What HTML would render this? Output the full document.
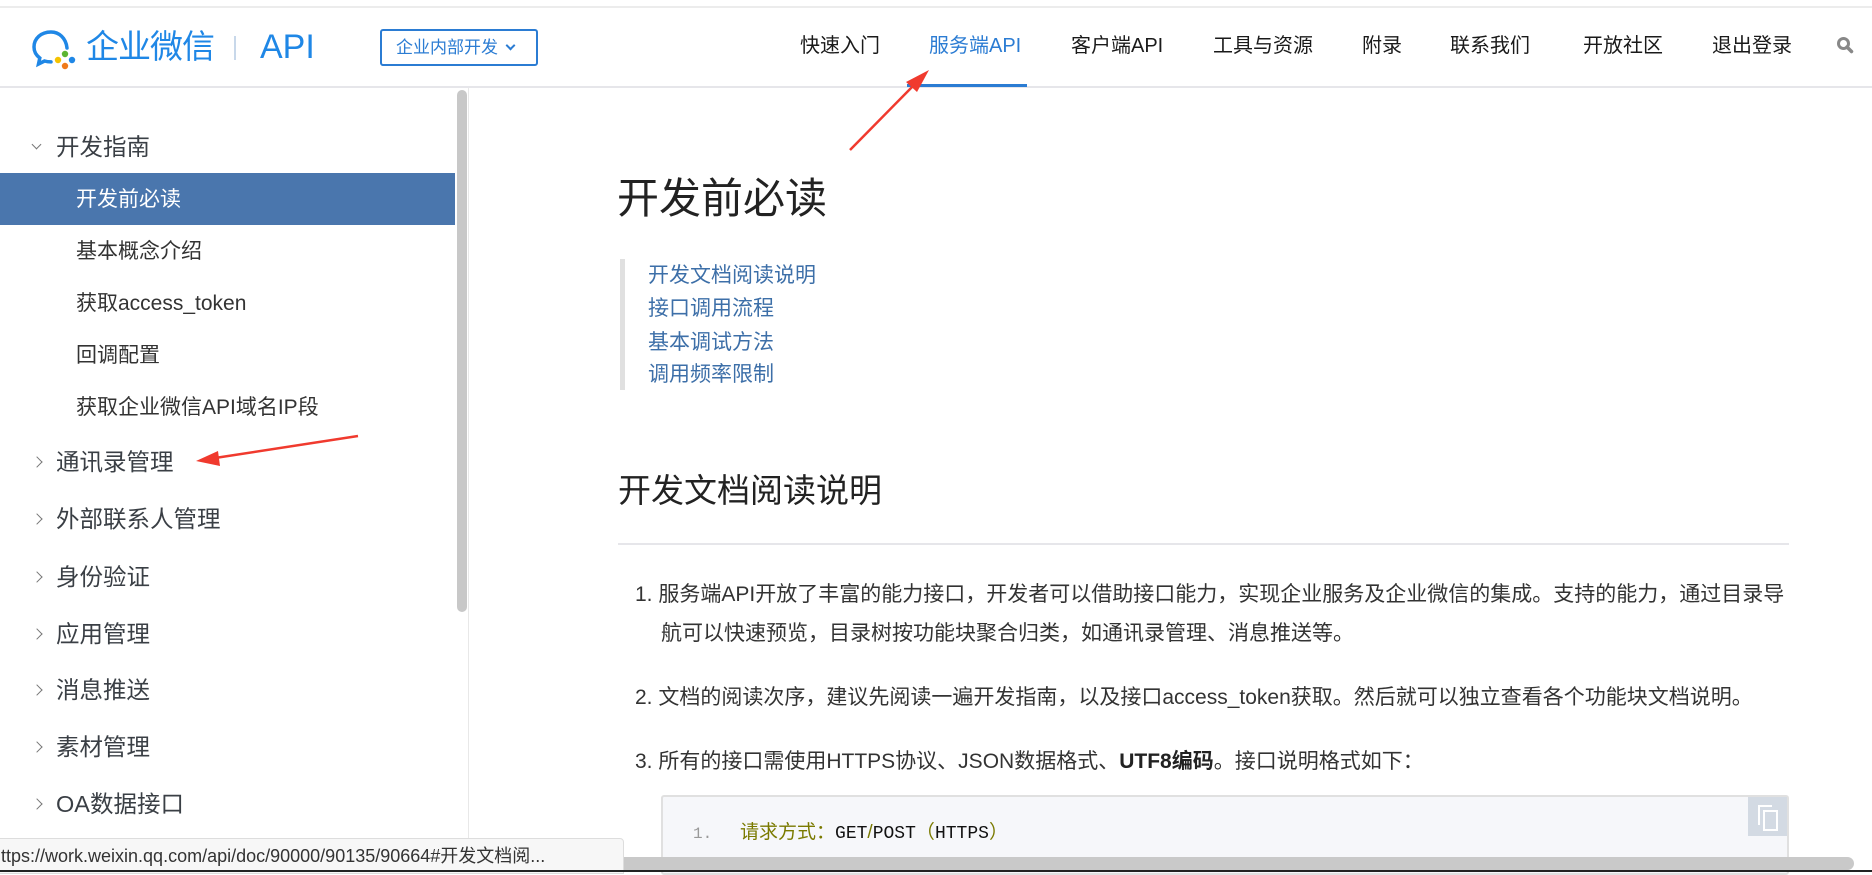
<!DOCTYPE html>
<html><head><meta charset="utf-8"><style>
*{margin:0;padding:0;box-sizing:border-box}
body{width:1872px;height:872px;overflow:hidden;background:#fff;position:relative;font-family:"Liberation Sans","Noto Sans CJK SC",sans-serif;color:#333}
.a{position:absolute;white-space:nowrap}
.nav{position:absolute;top:31px;height:30px;line-height:30px;font-size:20px;color:#1a1a1a}
.side{font-size:23.5px;color:#3a3f45;height:34px;line-height:34px;left:56px}
.chev{position:absolute;left:33px;width:8px;height:8px;border-right:1.6px solid #777;border-top:1.6px solid #777;transform:rotate(45deg)}
.sub{font-size:21px;color:#333;left:76px;height:30px;line-height:30px}
.toc{left:648px;font-size:21px;color:#3d6fa8;height:30px;line-height:30px}
.li{font-size:21px;color:#333;height:30px;line-height:30px}
</style></head><body>
<div class="a" style="left:0;top:6px;width:1872px;height:2px;background:#ececec"></div>
<svg class="a" style="left:31px;top:28px" width="48" height="44" viewBox="0 0 48 44">
<path d="M36 20C35 10 28 4 20 4C10 4 3 10.5 3 19c0 4.5 2.2 8.3 5.8 11L7.5 36l6-3c2 .6 4.2 .9 6.5 .9" fill="none" stroke="#1f87e6" stroke-width="3.5" stroke-linecap="round"/>
<circle cx="34" cy="26" r="3.2" fill="#5cb531"/><circle cx="41" cy="32" r="3.2" fill="#1f87e6"/><circle cx="27" cy="32" r="3.2" fill="#f5c300"/><circle cx="34" cy="38" r="3.2" fill="#f07a1a"/>
</svg>
<div class="a" style="left:86px;top:26px;font-size:33px;line-height:42px;color:#1f87e6;letter-spacing:-1px">企业微信</div>
<div class="a" style="left:234px;top:36px;width:2px;height:24px;background:#c8d8ea"></div>
<div class="a" style="left:260px;top:26px;font-size:34px;line-height:42px;color:#1f87e6">API</div>
<div class="a" style="left:380px;top:29px;width:158px;height:37px;border:2px solid #2b7cd3;border-radius:3px;color:#2b7cd3;font-size:17px;line-height:33px;padding-left:14px">企业内部开发 <span style="display:inline-block;width:7px;height:7px;border-right:2px solid #2b7cd3;border-bottom:2px solid #2b7cd3;transform:rotate(45deg);margin-left:4px;position:relative;top:-4px"></span></div>
<div class="nav" style="left:800px">快速入门</div>
<div class="nav" style="left:929px;color:#2b7cd3">服务端API</div>
<div class="nav" style="left:1071px">客户端API</div>
<div class="nav" style="left:1213px">工具与资源</div>
<div class="nav" style="left:1362px">附录</div>
<div class="nav" style="left:1450px">联系我们</div>
<div class="nav" style="left:1583px">开放社区</div>
<div class="nav" style="left:1712px">退出登录</div>
<svg class="a" style="left:1836px;top:36px" width="18" height="18" viewBox="0 0 18 18"><circle cx="7.5" cy="7.5" r="5" fill="none" stroke="#888" stroke-width="3"/><path d="M11 11l4.5 4.5" stroke="#888" stroke-width="3.5" stroke-linecap="round"/></svg>
<div class="a" style="left:0;top:86px;width:1872px;height:2px;background:#e6e6ea"></div>
<div class="a" style="left:907px;top:84px;width:120px;height:3px;background:#2b7cd3"></div>
<div class="a" style="left:468px;top:88px;width:1px;height:784px;background:#e8e8e8"></div>
<div class="a" style="left:457px;top:90px;width:10px;height:522px;background:#c8c8c8;border-radius:5px"></div>
<div class="chev" style="top:141px;transform:rotate(135deg);width:7px;height:7px"></div>
<div class="a side" style="top:130px">开发指南</div>
<div class="a" style="left:0;top:173px;width:455px;height:52px;background:#4a76ad"></div>
<div class="a sub" style="top:185px;color:#fff">开发前必读</div>
<div class="a sub" style="top:237px">基本概念介绍</div>
<div class="a sub" style="top:289px">获取access_token</div>
<div class="a sub" style="top:341px">回调配置</div>
<div class="a sub" style="top:393px">获取企业微信API域名IP段</div>
<div class="chev" style="top:458px"></div><div class="a side" style="top:445px">通讯录管理</div>
<div class="chev" style="top:515px"></div><div class="a side" style="top:502px">外部联系人管理</div>
<div class="chev" style="top:573px"></div><div class="a side" style="top:560px">身份验证</div>
<div class="chev" style="top:630px"></div><div class="a side" style="top:617px">应用管理</div>
<div class="chev" style="top:686px"></div><div class="a side" style="top:673px">消息推送</div>
<div class="chev" style="top:743px"></div><div class="a side" style="top:730px">素材管理</div>
<div class="chev" style="top:800px"></div><div class="a side" style="top:787px">OA数据接口</div>
<div class="a" style="left:617px;top:174px;font-size:42px;line-height:50px;color:#222">开发前必读</div>
<div class="a" style="left:620px;top:259px;width:5px;height:131px;background:#e0e0e0"></div>
<div class="a toc" style="top:261px">开发文档阅读说明</div>
<div class="a toc" style="top:294px">接口调用流程</div>
<div class="a toc" style="top:328px">基本调试方法</div>
<div class="a toc" style="top:360px">调用频率限制</div>
<div class="a" style="left:618px;top:471px;font-size:33px;line-height:40px;color:#222">开发文档阅读说明</div>
<div class="a" style="left:618px;top:543px;width:1171px;height:2px;background:#e6e6ea"></div>
<div class="a li" style="left:635px;top:580px">1. 服务端API开放了丰富的能力接口，开发者可以借助接口能力，实现企业服务及企业微信的集成。支持的能力，通过目录导</div>
<div class="a li" style="left:661px;top:619px">航可以快速预览，目录树按功能块聚合归类，如通讯录管理、消息推送等。</div>
<div class="a li" style="left:635px;top:683px">2. 文档的阅读次序，建议先阅读一遍开发指南，以及接口access_token获取。然后就可以独立查看各个功能块文档说明。</div>
<div class="a li" style="left:635px;top:747px">3. 所有的接口需使用HTTPS协议、JSON数据格式、<b style="color:#222">UTF8编码</b>。接口说明格式如下：</div>
<div class="a" style="left:661px;top:795px;width:1128px;height:80px;background:#f6f7fa;border:2px solid #e0e0e0;border-radius:3px"></div>
<div class="a" style="left:1748px;top:797px;width:39px;height:39px;background:#d3dae3"></div>
<div class="a" style="left:1758px;top:805px;width:14px;height:20px;border:2px solid #fff;border-right:none;border-bottom:none"></div>
<div class="a" style="left:1763px;top:810px;width:15px;height:21px;border:2px solid #fff"></div>
<div class="a" style="left:693px;top:822px;font-size:16px;line-height:24px;color:#999;font-family:'Liberation Mono',monospace">1.</div>
<div class="a" style="left:740px;top:820px;font-size:19px;line-height:26px;color:#7a7a00">请求方式：<span style="color:#111;font-family:'Liberation Mono',monospace;font-size:18px">GET</span>/<span style="color:#111;font-family:'Liberation Mono',monospace;font-size:18px">POST</span>（<span style="color:#111;font-family:'Liberation Mono',monospace;font-size:18px">HTTPS</span>）</div>
<div class="a" style="left:-2px;top:838px;width:626px;height:36px;background:#f7f7f7;border:1px solid #ddd;border-radius:0 4px 0 0;font-size:18px;line-height:34px;color:#333;overflow:hidden"><span style="margin-left:-8px">https://work.weixin.qq.com/api/doc/90000/90135/90664#开发文档阅...</span></div>
<div class="a" style="left:624px;top:857px;width:1230px;height:13px;background:#c9c9c9;border-radius:0 7px 7px 0"></div>
<div class="a" style="left:0;top:870px;width:1872px;height:2px;background:#222"></div>
<svg class="a" style="left:0;top:0" width="1872" height="872">
<path d="M850 150L915 84" stroke="#f03a2e" stroke-width="2.5"/><path d="M929 70L906 82L917 92Z" fill="#f03a2e"/>
<path d="M358 436L215 458" stroke="#f03a2e" stroke-width="2.5"/><path d="M196 461L218 451L220 466Z" fill="#f03a2e"/>
</svg>
</body></html>
